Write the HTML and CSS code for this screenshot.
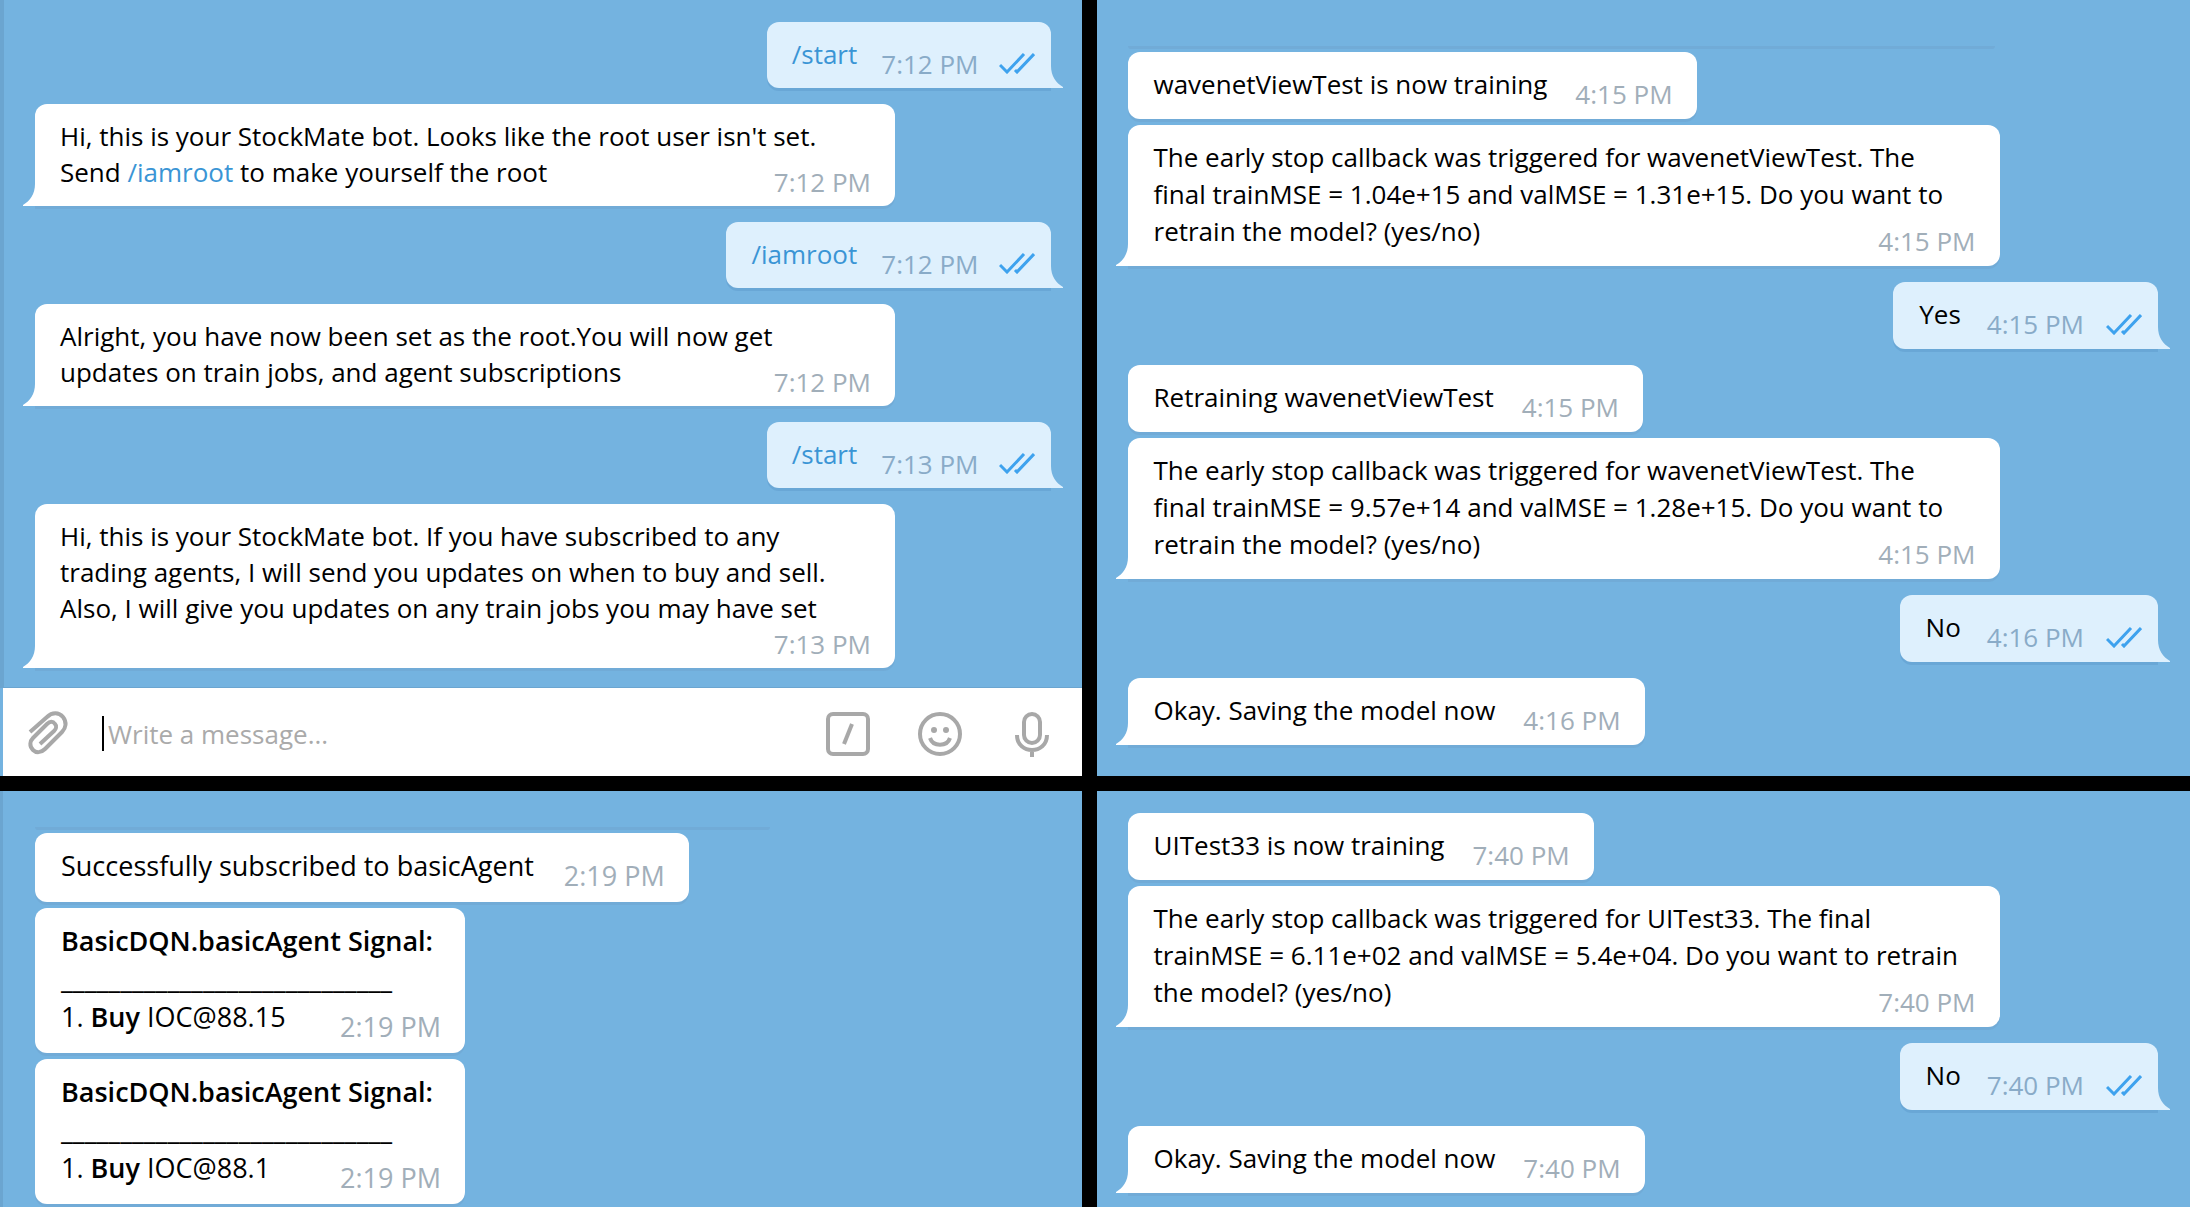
FILE: index.html
```html
<!DOCTYPE html>
<html lang="en">
<head>
<meta charset="utf-8">
<title>StockMate bot chats</title>
<link rel="stylesheet" href="styles.css">
</head>
<body>
<svg class="sprite" aria-hidden="true">
  <symbol id="checks" viewBox="0 0 36 21"><path d="M1 12l7 7L25 1M16 17l2 2L35 1"/></symbol>
  <symbol id="tail" viewBox="0 0 14 22"><path d="M14 0H12C12 10 7 17 0 21V22H14Z"/></symbol>
</svg>
<main class="board">
  <section class="chat chat-root" aria-label="Root setup">
    <div class="log">
      <div class="msg out"><p><a href="#start">/start</a></p><time>7:12 PM</time><svg class="checks"><use href="#checks"/></svg><svg class="tail"><use href="#tail"/></svg></div>
      <div class="msg in wide"><p>Hi, this is your StockMate bot. Looks like the root user isn't set.<br>Send <a href="#iamroot">/iamroot</a> to make yourself the root</p><time>7:12 PM</time><svg class="tail"><use href="#tail"/></svg></div>
      <div class="msg out"><p><a href="#iamroot">/iamroot</a></p><time>7:12 PM</time><svg class="checks"><use href="#checks"/></svg><svg class="tail"><use href="#tail"/></svg></div>
      <div class="msg in wide"><p>Alright, you have now been set as the root.You will now get<br>updates on train jobs, and agent subscriptions</p><time>7:12 PM</time><svg class="tail"><use href="#tail"/></svg></div>
      <div class="msg out"><p><a href="#start">/start</a></p><time>7:13 PM</time><svg class="checks"><use href="#checks"/></svg><svg class="tail"><use href="#tail"/></svg></div>
      <div class="msg in wide stacked"><p>Hi, this is your StockMate bot. If you have subscribed to any<br>trading agents, I will send you updates on when to buy and sell.<br>Also, I will give you updates on any train jobs you may have set</p><time>7:13 PM</time><svg class="tail"><use href="#tail"/></svg></div>
    </div>
    <form class="composer">
      <button type="button" aria-label="Attach file"><svg viewBox="0 0 44 44"><path d="M2 20L19 5C24 0 31 0 35 5C39 10 38 16 34 20L17 37C13 41 8 41 5 38C1 34 2 29 5 26L19 12C22 9 25 9 27 12C29 14 28 17 26 19L12 32"/></svg></button>
      <label class="field"><span class="caret"></span><input type="text" placeholder="Write a message..." aria-label="Message"></label>
      <button type="button" aria-label="Bot commands"><svg viewBox="0 0 44 44"><rect x="2" y="2" width="40" height="40" rx="5"/><path d="M26 12L18 32"/></svg></button>
      <button type="button" aria-label="Emoji"><svg viewBox="0 0 44 44"><circle cx="22" cy="22" r="20"/><circle class="dot" cx="16" cy="18" r="3"/><circle class="dot" cx="28" cy="18" r="3"/><path d="M12 26C15 35 29 35 32 26"/></svg></button>
      <button type="button" aria-label="Record voice"><svg viewBox="0 0 44 44"><rect x="14" y="2" width="16" height="29" rx="8"/><path d="M7 23C7 43 37 43 37 23M22 38V45"/></svg></button>
    </form>
  </section>

  <section class="chat chat-train" aria-label="Training jobs">
    <div class="log">
      <div class="edge"></div>
      <div class="msg in joined"><p>wavenetViewTest is now training</p><time>4:15 PM</time></div>
      <div class="msg in wide"><p>The early stop callback was triggered for wavenetViewTest. The<br>final trainMSE = 1.04e+15 and valMSE = 1.31e+15. Do you want to<br>retrain the model? (yes/no)</p><time>4:15 PM</time><svg class="tail"><use href="#tail"/></svg></div>
      <div class="msg out"><p>Yes</p><time>4:15 PM</time><svg class="checks"><use href="#checks"/></svg><svg class="tail"><use href="#tail"/></svg></div>
      <div class="msg in joined"><p>Retraining wavenetViewTest</p><time>4:15 PM</time></div>
      <div class="msg in wide"><p>The early stop callback was triggered for wavenetViewTest. The<br>final trainMSE = 9.57e+14 and valMSE = 1.28e+15. Do you want to<br>retrain the model? (yes/no)</p><time>4:15 PM</time><svg class="tail"><use href="#tail"/></svg></div>
      <div class="msg out"><p>No</p><time>4:16 PM</time><svg class="checks"><use href="#checks"/></svg><svg class="tail"><use href="#tail"/></svg></div>
      <div class="msg in"><p>Okay. Saving the model now</p><time>4:16 PM</time><svg class="tail"><use href="#tail"/></svg></div>
    </div>
  </section>

  <section class="chat chat-signals" aria-label="Agent signals">
    <div class="log">
      <div class="edge"></div>
      <div class="msg in joined"><p>Successfully subscribed to basicAgent</p><time>2:19 PM</time></div>
      <div class="msg in joined signal"><p><b>BasicDQN.basicAgent Signal:</b><br>____________________________<br>1. <b>Buy</b> IOC@88.15</p><time>2:19 PM</time></div>
      <div class="msg in signal"><p><b>BasicDQN.basicAgent Signal:</b><br>____________________________<br>1. <b>Buy</b> IOC@88.1</p><time>2:19 PM</time></div>
    </div>
  </section>

  <section class="chat chat-train chat-uitest" aria-label="UI test training">
    <div class="log">
      <div class="msg in joined"><p>UITest33 is now training</p><time>7:40 PM</time></div>
      <div class="msg in wide"><p>The early stop callback was triggered for UITest33. The final<br>trainMSE = 6.11e+02 and valMSE = 5.4e+04. Do you want to retrain<br>the model? (yes/no)</p><time>7:40 PM</time><svg class="tail"><use href="#tail"/></svg></div>
      <div class="msg out"><p>No</p><time>7:40 PM</time><svg class="checks"><use href="#checks"/></svg><svg class="tail"><use href="#tail"/></svg></div>
      <div class="msg in"><p>Okay. Saving the model now</p><time>7:40 PM</time><svg class="tail"><use href="#tail"/></svg></div>
    </div>
  </section>
</main>
</body>
</html>
```

FILE: styles.css
```css
* { box-sizing: border-box; }

body {
  margin: 0;
  background: #000;
  color: #000;
  font-family: "Open Sans", "Noto Sans", sans-serif;
}

.sprite { position: absolute; width: 0; height: 0; }

.board {
  display: grid;
  grid-template-columns: 1082fr 1094fr;
  gap: 15px;
  min-height: 100vh;
  grid-template-rows: auto 1fr;
}

.chat {
  display: flex;
  flex-direction: column;
  min-width: 0;
  background: #74b3e0;
  font-size: 26px;
  line-height: 36px;
}

.log {
  flex: 1;
  display: flex;
  flex-direction: column;
  align-items: flex-start;
  padding: 22px 31px 20px;
}

.chat-root .log { border-left: 4px solid #6ba5d0; }

.chat-train { line-height: 37px; }
.chat-train .log { padding: 46px 32px 30px 31px; }
.chat-uitest .log { padding-top: 22px; padding-bottom: 13px; }

.chat-signals { font-size: 27px; line-height: 38px; }
.chat-signals .log { padding: 36px 32px 3px; border-left: 3px solid #6ba5d0; }

/* lower edge of a message scrolled out of view */
.edge {
  width: 867px;
  max-width: 100%;
  height: 3px;
  margin-bottom: 3px;
  border-radius: 0 0 12px 12px;
  background: #71abd7;
}

.chat-signals .edge { width: 735px; }

.msg {
  position: relative;
  display: flex;
  align-items: flex-end;
  justify-content: space-between;
  gap: 24px;
  margin-bottom: 16px;
  padding: 14px 24px 16px 26px;
  border-radius: 12px;
  background: #fff;
  box-shadow: 0 3px 0 #71abd7;
}

.chat-root .msg { padding-left: 25px; }
.chat-train .msg { gap: 28px; }
.chat-train .out { gap: 26px; }
.chat-signals .msg { gap: 30px; padding-bottom: 17px; }

.msg:last-child { margin-bottom: 0; }
.msg p { margin: 0; white-space: nowrap; }
.msg b { font-weight: 600; }
.msg a { color: #3a95d5; text-decoration: none; }

.msg time {
  margin-bottom: -10px;
  color: #a1aeb9;
  font-size: 26px;
  white-space: nowrap;
}

.chat-signals time { font-size: 27px; }

.wide { width: 860px; }
.chat-train .wide { width: 872px; }
.signal { width: 430px; }
.chat .wide, .chat .signal { gap: 0; }
.wide time, .signal time { margin-left: -110px; }
.joined { margin-bottom: 6px; }
.stacked { flex-direction: column; align-items: flex-start; }
.stacked time { align-self: flex-end; }

.out {
  align-self: flex-end;
  background: #def0fd;
  box-shadow: 0 3px 0 #69a7d6;
}

.out time { color: #89abc8; }

.checks {
  width: 36px;
  height: 21px;
  margin: 0 -8px -2px -4px;
  fill: none;
  stroke: #3ea2ee;
  stroke-width: 3;
}

.tail {
  position: absolute;
  bottom: 0;
  left: -12px;
  width: 14px;
  height: 22px;
  fill: #fff;
}

.msg:has(.tail) { border-bottom-left-radius: 0; }

.out.out {
  border-bottom-left-radius: 12px;
  border-bottom-right-radius: 0;
}

.out .tail {
  left: auto;
  right: -12px;
  fill: #def0fd;
  transform: scaleX(-1);
}

.composer {
  display: flex;
  align-items: center;
  height: 88px;
  margin-left: 3px;
  padding: 4px 28px 0 25px;
  background: #fff;
  box-shadow: 0 -1px 0 #6ba5d0;
}

.composer button {
  display: flex;
  padding: 0;
  border: 0;
  background: none;
}

.composer button + button { margin-left: 48px; }

.composer svg {
  width: 44px;
  height: 44px;
  overflow: visible;
  fill: none;
  stroke: #a8a8a8;
  stroke-width: 4;
}

.composer .dot { fill: #a8a8a8; stroke: none; }

.field {
  flex: 1;
  display: flex;
  align-items: flex-start;
  min-width: 0;
  margin-left: 30px;
}

.caret { width: 2px; height: 35px; background: #000; }

.field input {
  flex: 1;
  min-width: 0;
  padding: 0 4px;
  border: 0;
  outline: 0;
  background: none;
  font: inherit;
}

.field input::placeholder { color: #aaa; opacity: 1; }
```
